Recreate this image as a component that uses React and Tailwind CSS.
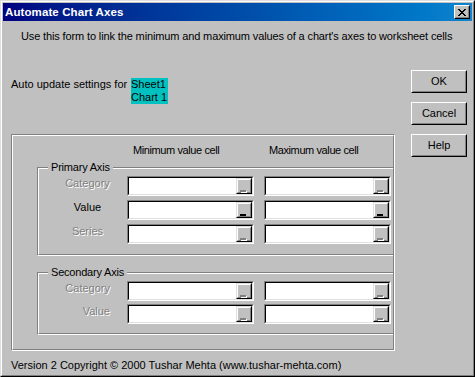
import React from "react";

function CloseGlyph() {
  const px = [
    [0, 0], [1, 0], [6, 0], [7, 0],
    [1, 1], [2, 1], [5, 1], [6, 1],
    [2, 2], [3, 2], [4, 2], [5, 2],
    [3, 3], [4, 3],
    [2, 4], [3, 4], [4, 4], [5, 4],
    [1, 5], [2, 5], [5, 5], [6, 5],
    [0, 6], [1, 6], [6, 6], [7, 6],
  ];
  return (
    <svg width="8" height="7" viewBox="0 0 8 7" shapeRendering="crispEdges">
      {px.map(([x, y], i) => (
        <rect key={i} x={x} y={y} width="1" height="1" fill="#000" />
      ))}
    </svg>
  );
}

function RefEdit({ enabled }) {
  return (
    <div className="w-[127px] h-[20px] border border-t-[#808080] border-l-[#808080] border-b-white border-r-white">
      <div className="h-full w-full border border-t-black border-l-black border-b-[#dfdfdf] border-r-[#dfdfdf] bg-white flex justify-end">
        <div className="w-[16px] h-[16px] border border-t-[#dfdfdf] border-l-[#dfdfdf] border-b-black border-r-black bg-[#c0c0c0]">
          <div className="h-full w-full border border-t-white border-l-white border-b-[#808080] border-r-[#808080] pl-[2px] pt-[10px]">
            {enabled ? (
              <div className="w-[6px] h-[2px] bg-black" />
            ) : (
              <div className="w-[6px] h-[2px] bg-[#808080] shadow-[1px_1px_0_#fff]" />
            )}
          </div>
        </div>
      </div>
    </div>
  );
}

function Row({ label, enabled, align = "center" }) {
  const labelCls =
    align === "center"
      ? "w-[88px] pl-[9px] text-center"
      : "w-[88px] pr-[17px] text-right";
  const color = enabled
    ? "text-black"
    : "text-[#808080] [text-shadow:1px_1px_0_#fff]";
  return (
    <div className="flex items-start">
      <div className={`${labelCls} ${color} pt-[1px] leading-[13px]`}>{label}</div>
      <RefEdit enabled={enabled} />
      <div className="ml-[10px]">
        <RefEdit enabled={enabled} />
      </div>
    </div>
  );
}

function Group({ label, children, className = "" }) {
  return (
    <div
      className={`relative ml-[24px] border-t border-l border-b border-t-[#808080] border-l-[#808080] border-b-white ${className}`}
    >
      <div className="border-t border-l border-b border-t-white border-l-white border-b-[#808080]">
        {children}
      </div>
      <span className="absolute left-[10px] top-[-7px] bg-[#c0c0c0] px-[3px] leading-[13px] whitespace-nowrap tracking-[-0.2px]">
        {label}
      </span>
    </div>
  );
}

function DlgButton({ children }) {
  return (
    <div className="w-[56px] h-[23px] border border-t-white border-l-white border-b-black border-r-black">
      <div className="h-full w-full border border-t-[#c0c0c0] border-l-[#c0c0c0] border-b-[#808080] border-r-[#808080] flex items-center justify-center leading-[13px]">
        {children}
      </div>
    </div>
  );
}

export default function App() {
  return (
    <div className="w-[475px] h-[377px] font-['Liberation_Sans',Arial,sans-serif] text-[11px] text-black border border-t-[#dfdfdf] border-l-[#dfdfdf] border-b-black border-r-black">
      <div className="h-full w-full border border-t-white border-l-white border-b-[#808080] border-r-[#808080] bg-[#c0c0c0] p-[1px] flex flex-col">
        {/* Title bar */}
        <div className="h-[18px] flex items-center justify-between bg-gradient-to-r from-[#000080] to-[#1084d0] pl-[2px] pr-[2px]">
          <span className="text-white font-bold text-[11.5px] leading-[13px] whitespace-nowrap tracking-[0.1px]">
            Automate Chart Axes
          </span>
          <div className="w-[16px] h-[14px] border border-t-white border-l-white border-b-black border-r-black bg-[#c0c0c0]">
            <div className="h-full w-full border border-t-[#c0c0c0] border-l-[#c0c0c0] border-b-[#808080] border-r-[#808080] flex items-center justify-center">
              <CloseGlyph />
            </div>
          </div>
        </div>

        {/* Body */}
        <div className="flex-1 flex flex-col">
          <div className="mt-[9px] pl-[18px] h-[13px] leading-[13px] whitespace-nowrap tracking-[-0.13px]">
            Use this form to link the minimum and maximum values of a chart's axes to worksheet cells
          </div>

          <div className="flex">
            {/* Left column */}
            <div className="w-[408px] flex flex-col">
              <div className="mt-[35px] ml-[8px] flex items-start">
                <span className="w-[120px] leading-[13px] whitespace-nowrap">
                  Auto update settings for
                </span>
                <div className="w-[37px] bg-[#00c0c0] leading-[13px] whitespace-nowrap">
                  <div>Sheet1</div>
                  <div>Chart 1</div>
                </div>
              </div>

              {/* Frame */}
              <div className="mt-[30px] ml-[8px] w-[384px] h-[217px] border border-t-[#808080] border-l-[#808080] border-b-white border-r-white">
                <div className="h-full w-full border border-t-white border-l-white border-b-[#808080] border-r-[#808080] pt-[8px] overflow-hidden">
                  <div className="flex pl-[114px] leading-[13px] whitespace-nowrap tracking-[-0.4px]">
                    <div className="w-[127px] pl-[6px]">Minimum value cell</div>
                    <div className="ml-[10px] w-[127px] pl-[5px]">Maximum value cell</div>
                  </div>

                  <Group label="Primary Axis" className="mt-[10px]">
                    <div className="pt-[7px] pb-[10px] flex flex-col gap-[4px]">
                      <Row label="Category" enabled={false} />
                      <Row label="Value" enabled={true} />
                      <Row label="Series" enabled={false} />
                    </div>
                  </Group>

                  <Group label="Secondary Axis" className="mt-[16px]">
                    <div className="pt-[7px] pb-[9px] flex flex-col gap-[3px]">
                      <Row label="Category" enabled={false} align="right" />
                      <Row label="Value" enabled={false} align="right" />
                    </div>
                  </Group>
                </div>
              </div>

              <div className="mt-[8px] ml-[8px] leading-[13px] whitespace-nowrap">
                Version 2 Copyright © 2000 Tushar Mehta (www.tushar-mehta.com)
              </div>
            </div>

            {/* Right column */}
            <div className="w-[56px] mt-[27px] flex flex-col gap-[9px]">
              <DlgButton>OK</DlgButton>
              <DlgButton>Cancel</DlgButton>
              <DlgButton>Help</DlgButton>
            </div>
          </div>
        </div>
      </div>
    </div>
  );
}
